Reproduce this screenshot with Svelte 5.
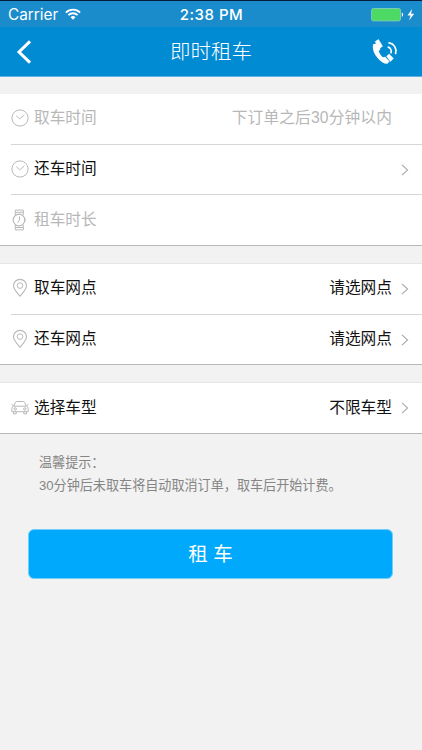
<script>
    const groups = [
        [
            { icon: 'clock', label: '取车时间', value: '下订单之后30分钟以内', muted: true, arrow: false },
            { icon: 'clock', label: '还车时间', value: '', muted: false, arrow: true },
            { icon: 'watch', label: '租车时长', value: '', muted: true, arrow: false }
        ],
        [
            { icon: 'pin', label: '取车网点', value: '请选网点', muted: false, arrow: true },
            { icon: 'pin', label: '还车网点', value: '请选网点', muted: false, arrow: true }
        ],
        [
            { icon: 'car', label: '选择车型', value: '不限车型', muted: false, arrow: true }
        ]
    ]
</script>

<div class="screen">
    <div class="status">
        <div class="carrier">
            <span>Carrier</span>
            <svg width="16" height="12" viewBox="0 0 16 12" fill="none" stroke="#fff" stroke-width="1.9">
                <path d="M.9 4.6a10 10 0 0 1 14.2 0M3.4 7.2a6.5 6.5 0 0 1 9.2 0" />
                <path d="M8 11.7 5.5 9.2a3.6 3.6 0 0 1 5 0z" fill="#fff" stroke="none" />
            </svg>
        </div>
        <div class="time">2:38 PM</div>
        <div class="power">
            <svg width="44" height="14" viewBox="0 0 44 14">
                <rect x=".5" y=".5" width="29" height="12.4" rx="1.8" fill="#4cd964" stroke="#78c9b6" />
                <path d="M30.8 4.6c1.8.4 1.8 3.8 0 4.2z" fill="#fff" />
                <path d="M41.2.8 36.5 7.4h3.1l-1.6 5.2 5.2-6.9h-3.2z" fill="#fff" />
            </svg>
        </div>
    </div>

    <header class="nav">
        <svg class="back" width="16" height="24" viewBox="0 0 16 24" fill="none" stroke="#fff" stroke-width="3">
            <path d="M14 1.3 3 12l11 10.7" />
        </svg>
        <h1>即时租车</h1>
        <svg class="phone" width="26" height="26" viewBox="0 0 26 26">
            <path d="M1.2 5.2C.2 8.5 1.2 13.4 5 18.2s7.3 6.8 10.3 6.6l2.2-2.4-4.3-4.7-2 .6C9.2 17.1 7.3 14.3 6.8 12l1.7-1.7L5.8 4.1z" fill="#fff" />
            <path d="m3.2 2.6 3.3-2 4 6.6-3.1 2.2zM14.7 17.2l2.4-2.2 4.3 4.4-3 3z" fill="#fff" stroke="#fff" stroke-width=".6" stroke-linejoin="round" />
            <path d="M16.3 8.1a4.6 4.6 0 0 1 2.7 5.6M17.1 3.9c4.9.8 8 5.6 6.5 10.5" fill="none" stroke="#fff" stroke-width="1.7" stroke-linecap="round" />
        </svg>
    </header>

    {#each groups as rows}
        <section class="group">
            {#each rows as row}
                <div class="row" class:muted={row.muted}>
                    <svg class="icon" width="18" height="22" viewBox="0 0 18 22" fill="none" stroke="#b9b9b9" stroke-width="1">
                        {#if row.icon === 'clock'}
                            <circle cx="9" cy="11" r="8.1" />
                            <path d="m5.3 8.8 3.4 3 4.7-3.9" />
                        {:else if row.icon === 'watch'}
                            <circle cx="8" cy="11" r="5.8" stroke-width="1.2" />
                            <path d="M4.3 6V1.1h8V6M4.3 16v4.900h8V16M4.3 3.3h8M4.3 18.5h8M8.5 7.500V11l-2 2.500M14 10v2" />
                        {:else if row.icon === 'pin'}
                            <path d="M9 19.2C6.500 16 2.500 12.400 2.500 8.700a6.500 6.300 0 0 1 13 0C15.500 12.400 11.500 16 9 19.200z" stroke-width="1.1" />
                            <circle cx="9" cy="8.6" r="2.8" />
                        {:else}
                            <path d="m2.7 9.400 1.800-4.100q.3-.8 1.200-.8h6.600q.9 0 1.200.8l1.800 4.100M2.800 9.200h12.400q2 .5 2 2.300v3.200H.8v-3.200q0-1.800 2-2.300zM.5 7.600l2 .8M17.500 7.600l-2 .8M2.500 14.700v2.200h2.700v-2.200M12.800 14.700v2.200h2.700v-2.200" />
                            <circle cx="4.2" cy="12" r="1.2" />
                            <circle cx="13.8" cy="12" r="1.2" />
                        {/if}
                    </svg>
                    <span class="label">{row.label}</span>
                    <span class="value">{row.value}</span>
                    <span class="more">
                        {#if row.arrow}
                            <svg width="8" height="12" viewBox="0 0 8 12" fill="none" stroke="#aaa" stroke-width="1.1">
                                <path d="m1 .8 5.600 5.200L1 11.200" />
                            </svg>
                        {/if}
                    </span>
                </div>
            {/each}
        </section>
    {/each}

    <div class="tips">
        <p>温馨提示：</p>
        <p>30分钟后未取车将自动取消订单，取车后开始计费。</p>
    </div>

    <button class="submit">租 车</button>
</div>

<style>
    :global(body)
    {
        margin: 0;
        background: #f2f2f2;
    }

    .screen
    {
        width: 422px;
        height: 750px;
        overflow: hidden;
        background: #f2f2f2;
        color: #111;
        font-family: "Liberation Sans", "Noto Sans CJK SC", sans-serif;
    }

    .status
    {
        box-sizing: border-box;
        height: 27px;
        padding: 1px 7px 0 8px;
        border-top: 1px solid #061b38;
        display: grid;
        grid-template-columns: 1fr auto 1fr;
        align-items: center;
        background: #1a8ccb;
        color: #fff;
        font-family: Inter, sans-serif;
        font-size: 15.3px;
    }

        .carrier
        {
            display: flex;
            align-items: center;
            gap: 7px;
        }

        .carrier svg
        {
            margin-bottom: 2px;
        }

        .time
        {
            font-weight: 500;
            font-size: 15px;
            letter-spacing: .5px;
        }

        .power
        {
            display: flex;
            justify-content: flex-end;
        }

    .nav
    {
        box-sizing: border-box;
        height: 50px;
        padding: 0 24px 0 16px;
        border-bottom: 1px solid #62b2df;
        display: grid;
        grid-template-columns: 1fr auto 1fr;
        align-items: center;
        background: #018bd2;
        color: #fff;
    }

        .nav h1
        {
            margin: 0 0 0 8px;
            font-size: 20.5px;
            font-weight: 300;
            line-height: 48px;
        }

        .phone
        {
            justify-self: end;
        }

    .group
    {
        margin-top: 17px;
        border-top: 1px solid #e6e6e6;
        border-bottom: 1px solid #b8b8b8;
        background: #fff;
    }

    .nav + .group
    {
        margin-top: 16px;
        border-top-color: #f2f2f2;
    }

        .row
        {
            height: 49.7px;
            margin-left: 11px;
            padding-right: 13px;
            display: flex;
            align-items: center;
            font-size: 15.7px;
        }

        .row + .row
        {
            border-top: 1px solid #d6d6d6;
        }

            .icon
            {
                margin-bottom: 1px;
            }

            .label
            {
                margin-left: 5px;
            }

            .value
            {
                margin-left: auto;
            }

            .label, .value
            {
                line-height: 24px;
                padding-bottom: 1px;
            }

            .muted .label, .muted .value
            {
                color: #b7b7b7;
            }

            .muted .value
            {
                letter-spacing: .15px;
            }

            .more
            {
                width: 8px;
                margin-left: 9px;
                display: flex;
            }

    .tips
    {
        margin: 17px 39px 0;
        color: #858585;
        font-size: 13.1px;
        line-height: 23px;
        white-space: nowrap;
    }

        .tips p
        {
            margin: 0;
        }

    .submit
    {
        display: block;
        width: 365px;
        height: 50px;
        margin: 32px 0 0 28px;
        padding: 0 0 3px;
        border: 1px solid #6fcffb;
        border-radius: 6px;
        background: #00a9fb;
        color: #fff;
        font-family: inherit;
        font-size: 19.5px;
    }
</style>
